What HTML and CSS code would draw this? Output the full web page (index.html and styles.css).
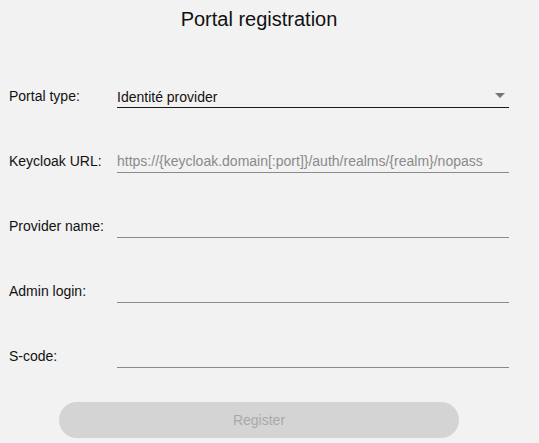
FILE: index.html
```html
<!DOCTYPE html>
<html lang="en">
<head>
<meta charset="utf-8">
<title>Portal registration</title>
<link rel="stylesheet" href="styles.css">
</head>
<body>
<main class="page">
  <h1 class="title">Portal registration</h1>
  <form class="form">
    <div class="row">
      <label class="label">Portal type:</label>
      <div class="select">
        <span class="select-value">Identité provider</span>
        <svg class="arrow" width="10" height="5" viewBox="0 0 10 5"><path d="M0 0H10L5 5Z" fill="#757575"/></svg>
      </div>
    </div>
    <div class="row">
      <label class="label" for="url">Keycloak URL:</label>
      <input class="field" id="url" type="text" placeholder="https://{keycloak.domain[:port]}/auth/realms/{realm}/nopass">
    </div>
    <div class="row">
      <label class="label" for="name">Provider name:</label>
      <input class="field" id="name" type="text">
    </div>
    <div class="row">
      <label class="label" for="login">Admin login:</label>
      <input class="field" id="login" type="text">
    </div>
    <div class="row">
      <label class="label" for="scode">S-code:</label>
      <input class="field" id="scode" type="text">
    </div>
    <div class="actions">
      <button class="btn" type="button" disabled>Register</button>
    </div>
  </form>
</main>
</body>
</html>
```

FILE: styles.css
```css
html, body {
  margin: 0;
  padding: 0;
  background: #f2f2f2;
}
body {
  font-family: "Liberation Sans", Arial, sans-serif;
  color: #111;
}
.page {
  width: 500px;
  padding: 8px 0 0 9px;
}
.title {
  margin: 0;
  font-size: 20px;
  font-weight: normal;
  line-height: 23px;
  text-align: center;
  color: #111;
}
.form {
  display: flex;
  flex-direction: column;
  gap: 42px;
  margin-top: 54px;
}
.row {
  display: flex;
  align-items: flex-end;
}
.label {
  width: 108px;
  flex: none;
  font-size: 14px;
  line-height: 16px;
  padding-bottom: 4px;
  color: #111;
}
.field, .select {
  flex: 1;
  box-sizing: border-box;
  height: 23px;
  margin: 0;
  padding: 0;
  border: none;
  border-bottom: 1px solid #8a8a8a;
  background: transparent;
  font-family: "Liberation Sans", Arial, sans-serif;
  font-size: 14px;
  color: #111;
  outline: none;
}
.field::placeholder {
  color: #8a8a8a;
  opacity: 1;
}
.select {
  display: flex;
  align-items: center;
  justify-content: space-between;
  border-bottom-color: #1a1a1a;
  padding-right: 4px;
}
.select-value {
  line-height: 16px;
  padding-top: 1px;
}
.arrow {
  display: block;
  margin-bottom: 2px;
}
.actions {
  display: flex;
  justify-content: center;
  margin-top: -8px;
}
.btn {
  width: 400px;
  height: 36px;
  border: none;
  border-radius: 18px;
  background: #d4d4d4;
  color: #a9a9a9;
  font-family: "Liberation Sans", Arial, sans-serif;
  font-size: 14px;
  padding: 0;
}
```
